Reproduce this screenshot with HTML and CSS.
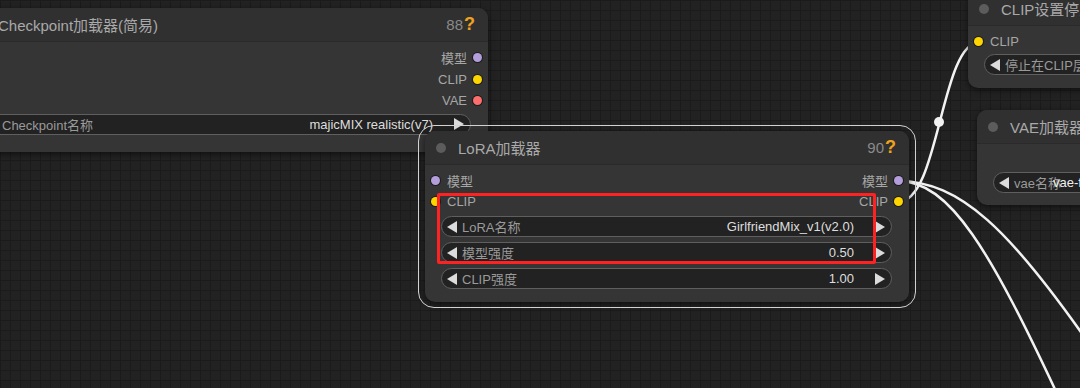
FILE: index.html
```html
<!DOCTYPE html>
<html lang="zh">
<head>
    <meta charset="UTF-8">
    <meta name="viewport" content="width=device-width, initial-scale=1.0">
    <title>LoRA加载器</title>
    <link rel="stylesheet" href="styles.css">
</head>
<body>
    <div class="canvas">
        <!-- links are drawn under the nodes -->
        <svg class="links" width="1080" height="388" viewBox="0 0 1080 388">
            <path d="M898,202 C940,202 940,42 980,42" />
            <path d="M898,181 C960,181 1010,230 1090,345" />
            <path d="M898,181 C950,181 990,250 1060,400" />
            <circle cx="939" cy="122" r="5" />
        </svg>

        <div class="node node-checkpoint">
            <div class="node-title">
                <span class="title-dot"></span>
                <span class="title-text">Checkpoint加载器(简易)</span>
                <span class="node-id">88<b>?</b></span>
            </div>
            <div class="node-body">
                <div class="slot out"><span>模型</span><i class="dot model"></i></div>
                <div class="slot out"><span>CLIP</span><i class="dot clip"></i></div>
                <div class="slot out"><span>VAE</span><i class="dot vae"></i></div>
                <div class="widget">
                    <i class="arrow-left"></i>
                    <span class="w-label">Checkpoint名称</span>
                    <span class="w-value">majicMIX realistic(v7)</span>
                    <i class="arrow-right"></i>
                </div>
            </div>
        </div>

        <div class="node node-lora selected">
            <div class="node-title">
                <span class="title-dot"></span>
                <span class="title-text">LoRA加载器</span>
                <span class="node-id">90<b>?</b></span>
            </div>
            <div class="node-body">
                <div class="slot-row">
                    <div class="slot in"><i class="dot model"></i><span>模型</span></div>
                    <div class="slot out"><span>模型</span><i class="dot model"></i></div>
                </div>
                <div class="slot-row">
                    <div class="slot in"><i class="dot clip"></i><span>CLIP</span></div>
                    <div class="slot out"><span>CLIP</span><i class="dot clip"></i></div>
                </div>
                <div class="widget">
                    <i class="arrow-left"></i>
                    <span class="w-label">LoRA名称</span>
                    <span class="w-value">GirlfriendMix_v1(v2.0)</span>
                    <i class="arrow-right"></i>
                </div>
                <div class="widget">
                    <i class="arrow-left"></i>
                    <span class="w-label">模型强度</span>
                    <span class="w-value">0.50</span>
                    <i class="arrow-right"></i>
                </div>
                <div class="widget">
                    <i class="arrow-left"></i>
                    <span class="w-label">CLIP强度</span>
                    <span class="w-value">1.00</span>
                    <i class="arrow-right"></i>
                </div>
            </div>
        </div>

        <div class="node node-clipskip">
            <div class="node-title">
                <span class="title-dot"></span>
                <span class="title-text">CLIP设置停止层</span>
            </div>
            <div class="node-body">
                <div class="slot in"><i class="dot clip"></i><span>CLIP</span></div>
                <div class="widget">
                    <i class="arrow-left"></i>
                    <span class="w-label">停止在CLIP层</span>
                </div>
            </div>
        </div>

        <div class="node node-vae">
            <div class="node-title">
                <span class="title-dot"></span>
                <span class="title-text">VAE加载器</span>
            </div>
            <div class="node-body">
                <div class="slot out"></div>
                <div class="widget">
                    <i class="arrow-left"></i>
                    <span class="w-label">vae名称</span>
                    <span class="w-value overflow">vae-ft-mse-840000-ema-pruned.safetensors</span>
                </div>
            </div>
        </div>

        <div class="highlight"></div>
    </div>
</body>
</html>
```

FILE: styles.css
```css
body {
    margin: 0;
    background-color: #222;
    font-family: "Liberation Sans", "Noto Sans CJK SC", sans-serif;
}

.canvas {
    position: relative;
    width: 1080px;
    height: 388px;
    overflow: hidden;
    background-color: #222222;
    background-image:
        linear-gradient(#1b1b1b 1px, transparent 1px),
        linear-gradient(90deg, #1b1b1b 1px, transparent 1px);
    background-size: 10px 10px;
}

.links {
    position: absolute;
    left: 0;
    top: 0;
}

.links path {
    fill: none;
    stroke: #f2f2f2;
    stroke-width: 2.5;
}

.links circle {
    fill: #f2f2f2;
}

/* Nodes */
.node {
    position: absolute;
    background-color: #353535;
    border-radius: 10px;
    box-shadow: 0 2px 6px rgba(0, 0, 0, 0.55);
    display: flex;
    flex-direction: column;
}

.node-title {
    height: 33px;
    flex-shrink: 0;
    display: flex;
    align-items: center;
    padding: 0 13px 0 11px;
    background-color: #303030;
    border-bottom: 1px solid #2a2a2a;
    border-radius: 10px 10px 0 0;
    font-size: 15px;
    color: #a9a9a9;
    white-space: nowrap;
}

.title-dot {
    width: 10px;
    height: 10px;
    border-radius: 50%;
    background-color: #5c5c5c;
    margin-right: 12px;
    flex-shrink: 0;
}

.node-id {
    margin-left: auto;
    color: #8a8a8a;
    font-size: 15px;
}

.node-id b {
    color: #f0a21e;
    font-size: 18px;
    margin-left: 1px;
}

.node-body {
    display: flex;
    flex-direction: column;
    padding-top: 5px;
}

.slot-row {
    display: flex;
    justify-content: space-between;
}

.slot {
    height: 21px;
    display: flex;
    align-items: center;
    font-size: 13px;
    color: #a6a6a6;
    white-space: nowrap;
}

.slot.in {
    padding-left: 6px;
}

.slot.in .dot {
    margin-right: 7px;
}

.slot.out {
    justify-content: flex-end;
    padding-right: 6px;
    margin-left: auto;
}

.slot.out .dot {
    margin-left: 6px;
}

.dot {
    width: 9px;
    height: 9px;
    border-radius: 50%;
    box-shadow: 0 0 0 1px #1c1c1c;
    flex-shrink: 0;
}

.dot.model { background-color: #b39ddb; }
.dot.clip { background-color: #ffd500; }
.dot.vae { background-color: #ff6e6e; }

/* Widgets */
.widget {
    height: 19px;
    margin: 4px 17px 0 16px;
    border: 1px solid #5f5f5f;
    border-radius: 11px;
    background-color: #222;
    display: flex;
    align-items: center;
    padding: 0 6px 0 5px;
    font-size: 13px;
    white-space: nowrap;
    overflow: hidden;
}

.widget + .widget {
    margin-top: 5px;
}

.w-label {
    color: #9a9a9a;
    margin-left: 5px;
}

.w-value {
    color: #dedede;
    margin-left: auto;
}

.w-value.overflow {
    margin-left: -8px;
    color: #f0f0f0;
}

.arrow-left,
.arrow-right {
    width: 0;
    height: 0;
    border-top: 6px solid transparent;
    border-bottom: 6px solid transparent;
    flex-shrink: 0;
}

.arrow-left {
    border-right: 10px solid #dcdcdc;
}

.arrow-right {
    border-left: 10px solid #dcdcdc;
    margin-left: 21px;
}

/* Node placement on the canvas */
.node-checkpoint {
    left: -35px;
    top: 8px;
    width: 523px;
    height: 144px;
}

.node-checkpoint .slot {
    height: 21.5px;
}

.node-checkpoint .widget {
    margin-top: 2px;
}

.node-lora {
    left: 425px;
    top: 131px;
    width: 484px;
    height: 171px;
}

.node.selected::before {
    content: "";
    position: absolute;
    top: -6px;
    bottom: -6px;
    left: -7px;
    right: -7px;
    border: 1.5px solid #d2d2d2;
    border-radius: 16px;
}

.node-clipskip {
    left: 968px;
    top: -8px;
    width: 220px;
    height: 96px;
}

.node-clipskip .widget {
    margin-top: 2px;
}

.node-vae {
    left: 977px;
    top: 110px;
    width: 220px;
    height: 95px;
}

.node-vae .widget {
    margin-top: 2px;
}

.highlight {
    position: absolute;
    left: 437px;
    top: 193px;
    width: 433px;
    height: 65px;
    border: 3px solid #ff2222;
    border-radius: 2px;
}
```
